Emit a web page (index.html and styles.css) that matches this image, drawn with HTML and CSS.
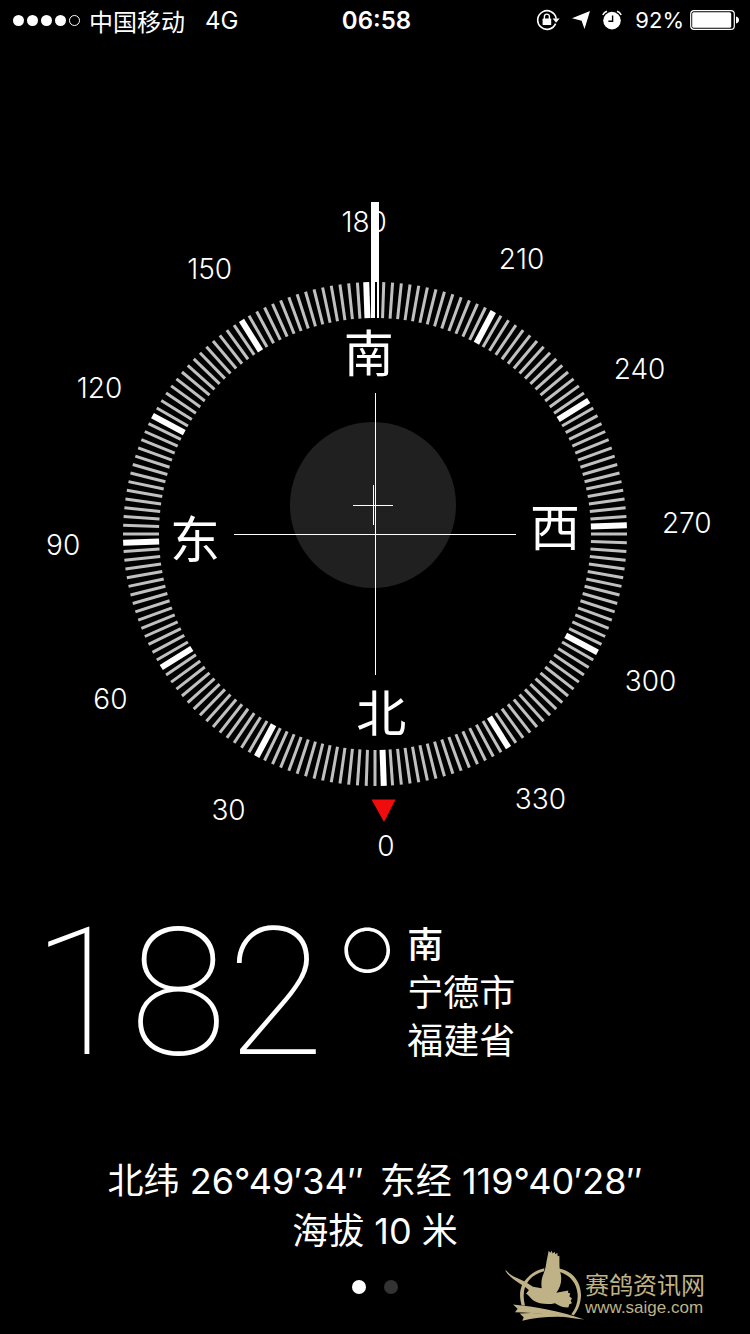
FILE: index.html
```html
<!DOCTYPE html>
<html lang="zh-CN">

<head>
    <meta charset="utf-8">
    <meta name="viewport" content="width=device-width, initial-scale=1.0">
    <title>指南针</title>
    <link rel="stylesheet" href="styles.css">
</head>

<body>
    <header class="status">
        <div class="status-left">
            <span class="signal"><i></i><i></i><i></i><i></i><i class="empty"></i></span>
            <span class="carrier">中国移动</span>
            <span>4G</span>
        </div>
        <time class="clock">06:58</time>
        <div class="status-right">
            <svg class="lock" viewBox="0 0 24 22" width="24" height="22">
                <path d="M19.6 14.6A9.3 9.3 0 1 1 20.2 9.6" fill="none" stroke="#fff" stroke-width="1.6" />
                <path d="M16.6 9.6h7l-3.5 4.2z" fill="#fff" />
                <rect x="6.600" y="9.6" width="8.6" height="6.4" rx=".6" fill="#fff" />
                <path d="M8.4 10V7.6a2.5 2.5 0 0 1 5 0V10" fill="none" stroke="#fff" stroke-width="1.4" />
            </svg>
            <svg class="arrow" viewBox="0 0 18 18" width="18" height="18">
                <path d="M18 0L12.500 18L9.600 9.800L0 7.2z" fill="#fff" />
            </svg>
            <svg class="alarm" viewBox="0 0 20 20" width="20" height="20">
                <circle cx="10" cy="10.6" r="8.8" fill="#fff" />
                <path d="M.8 5A7 7 0 0 1 5 1.2M15 1.2A7 7 0 0 1 19.2 5" fill="none" stroke="#fff" stroke-width="1.5" />
                <path d="M10.6 5.4v5.8H6.4" fill="none" stroke="#000" stroke-width="1.4" />
            </svg>
            <span class="percent">92%</span>
            <svg class="battery" viewBox="0 0 50 20" width="50" height="20">
                <rect x=".7" y=".7" width="43.6" height="18.6" rx="3.4" fill="none" stroke="#fff" stroke-width="1.2" />
                <rect x="2.2" y="2.2" width="39" height="15.6" rx="1.6" fill="#fff" />
                <path d="M46 6.6q3 .8 3 3.4t-3 3.4z" fill="#fff" />
            </svg>
        </div>
    </header>

    <main>
        <svg class="compass" viewBox="0 0 750 680">
            <circle class="level" cx="373" cy="315" r="83" />
            <g class="ticks"></g>
            <g class="degrees"></g>
            <g class="directions"></g>
            <path class="cross" d="M375.5 203V485M234 344.5H516M373.5 295V335M353 315.5H393" />
            <path class="north" d="M371.500 609.500H395.500L384 632z" />
            <path class="heading" d="M371 12H379V92H371z" />
            <path class="heading" d="M371 92H375V128H371zM377 92H379V128H377z" />
        </svg>

        <section class="readout">
            <h1 class="angle">182<span class="ring">°</span></h1>
            <div class="place">
                <p class="facing">南</p>
                <p>宁德市</p>
                <p>福建省</p>
            </div>
        </section>

        <section class="position">
            <p><span>北纬 26°49′34″</span><span>东经 119°40′28″</span></p>
            <p>海拔 10 米</p>
        </section>
    </main>

    <nav class="pager">
        <button class="valgt" aria-label="1"></button>
        <button aria-label="2"></button>
    </nav>

    <aside class="brand">
        <svg viewBox="40 25 240 218" width="80" height="73" fill="#bfb286">
            <path d="M90 194C80 158 86 132 106 112C122 96 138 86 158 82L157 91C138 96 124 104 112 118C96 138 92 160 100 194z" />
            <path d="M200 82C240 90 266 118 268 160C268 186 260 206 246 224L239 220C252 204 259 184 258 162C256 128 236 102 200 92z" />
            <path d="M42 87C54 102 66 107 78 112C96 120 110 128 124 138L150 142C148 122 150 112 155 100C161 86 163 74 165 60L171 30L176 36L180 30L183 38L189 33L191 40L197 36L198 46L203 45C204 66 202 78 206 94C212 116 208 138 194 156L230 149L229 156L236 158L233 166L241 173L237 180L241 187L233 190L230 200C214 200 202 195 190 187C170 192 142 190 124 178C116 172 112 164 103 158C108 154 108 150 112 148C94 130 60 118 42 91z" />
            <path d="M64 191C130 197 210 212 278 236C206 228 136 214 70 214L78 204z" />
            <path d="M84 218C126 214 172 218 224 228C172 226 128 230 92 240L96 229z" />
        </svg>
        <div>
            <p class="brand-name">赛鸽资讯网</p>
            <a class="brand-link" href="#">www.saige.com</a>
        </div>
    </aside>

    <script>
        const svgNs = "http://www.w3.org/2000/svg";
        const heading = 182;
        const center = { x: 375, y: 344 };
        const directions = { 0: "北", 90: "东", 180: "南", 270: "西" };

        function point(bearing, radius) {
            const angle = (bearing - heading) * Math.PI / 180;
            return {
                x: center.x + radius * Math.sin(angle),
                y: center.y - radius * Math.cos(angle)
            };
        }

        function addTick(bearing) {
            const inner = point(bearing, 216);
            const outer = point(bearing, 252);
            const line = document.createElementNS(svgNs, "line");
            line.setAttribute("x1", inner.x);
            line.setAttribute("y1", inner.y);
            line.setAttribute("x2", outer.x);
            line.setAttribute("y2", outer.y);
            if (bearing % 30 == 0) {
                line.setAttribute("class", "major");
            }
            document.querySelector(".ticks").appendChild(line);
        }

        function addText(parent, text, place) {
            const label = document.createElementNS(svgNs, "text");
            label.setAttribute("x", place.x);
            label.setAttribute("y", place.y);
            label.setAttribute("dy", "0.36em");
            label.textContent = text;
            document.querySelector(parent).appendChild(label);
        }

        for (let bearing = 0; bearing < 360; bearing += 2) {
            // the heading bar covers its own tick
            if (bearing != heading) {
                addTick(bearing);
            }
            if (bearing % 30 == 0) {
                addText(".degrees", bearing, point(bearing, 312));
            }
            if (directions[bearing]) {
                addText(".directions", directions[bearing], point(bearing, 180));
            }
        }
    </script>
</body>

</html>
```
FILE: styles.css
```css
* {
    box-sizing: border-box;
}

body {
    margin: 0;
    min-height: 100vh;
    position: relative;
    display: flex;
    flex-direction: column;
    background-color: #000;
    color: #fff;
    font-family: Inter, "Noto Sans CJK SC", sans-serif;
}

h1,
p {
    margin: 0;
    font-weight: 400;
}

svg {
    display: block;
}

.status {
    display: grid;
    grid-template-columns: 1fr auto 1fr;
    align-items: center;
    height: 40px;
    padding: 0 10px 0 13px;
    font-size: 24px;
}

.status-left,
.status-right {
    display: flex;
    align-items: center;
}

.status-right {
    justify-content: flex-end;
}

.signal {
    display: flex;
    gap: 3px;
    margin-right: 9px;
}

.signal i {
    width: 11px;
    height: 11px;
    border-radius: 50%;
    background-color: #fff;
}

.signal .empty {
    background-color: transparent;
    border: 1px solid #fff;
}

.carrier {
    margin-right: 20px;
}

.clock {
    font-weight: 600;
}

.arrow {
    margin: 0 12px;
}

.percent {
    margin: 0 6px 0 13px;
    font-size: 22px;
}

.compass {
    width: 100%;
    margin-top: 150px;
}

.level {
    fill: #202020;
}

.ticks line {
    stroke: #c0c0c0;
    stroke-width: 3;
}

.ticks .major {
    stroke: #fff;
    stroke-width: 6;
}

.degrees text,
.directions text {
    fill: #fff;
    font-size: 28px;
    font-weight: 300;
    text-anchor: middle;
}

.directions text {
    font-size: 50px;
    font-weight: 400;
}

.cross {
    stroke: #fff;
    stroke-width: 1;
}

.north {
    fill: #f00c0c;
}

.heading {
    fill: #fff;
}

.readout {
    display: flex;
    align-items: center;
    margin-top: 51px;
    padding-left: 32px;
}

.angle {
    display: flex;
    align-items: flex-start;
    gap: 8px;
    height: 144px;
    font-family: Roboto, sans-serif;
    font-size: 178px;
    font-weight: 100;
    line-height: 144px;
}

.ring {
    font-family: Inter, sans-serif;
    font-size: 154px;
    line-height: 128px;
}

.place {
    margin-left: 5px;
    font-size: 36px;
    line-height: 48px;
}

.facing {
    font-weight: 500;
}

.position {
    margin-top: 91px;
    font-size: 36px;
    line-height: 50px;
    text-align: center;
}

.position span + span {
    margin-left: 16px;
}

.pager {
    display: flex;
    justify-content: center;
    gap: 18px;
    margin-top: 24px;
}

.pager button {
    width: 14px;
    height: 14px;
    padding: 0;
    border: none;
    border-radius: 50%;
    background-color: #333;
}

.pager .valgt {
    background-color: #fff;
}

/* logo laid over the bottom corner */
.brand {
    position: absolute;
    right: 45px;
    bottom: 12px;
    display: flex;
    align-items: flex-end;
    color: #bfb286;
}

.brand-name {
    font-size: 24px;
    line-height: 24px;
}

.brand-link {
    display: block;
    margin-bottom: 4px;
    color: inherit;
    font-family: "Liberation Sans", Arial, sans-serif;
    font-size: 17px;
    line-height: 20px;
    text-decoration: none;
}
```
